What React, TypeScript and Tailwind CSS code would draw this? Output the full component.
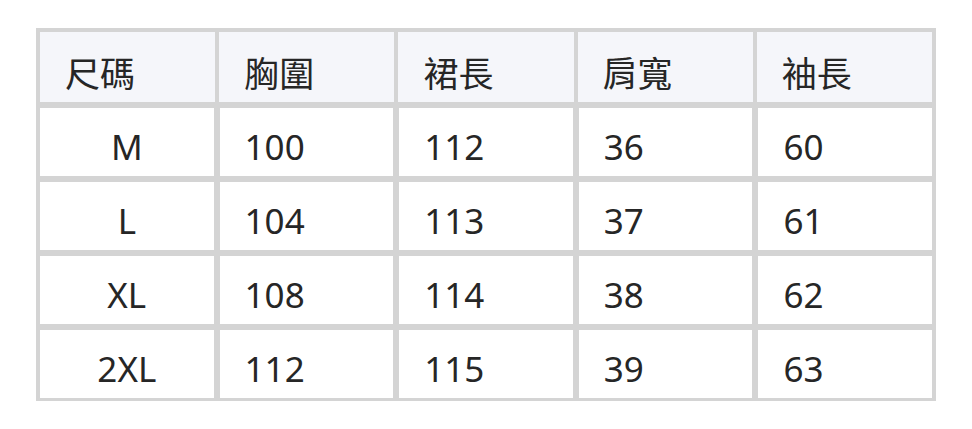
import React from "react";

const HEADERS = ["尺碼", "胸圍", "裙長", "肩寬", "袖長"];

const ROWS = [
  ["M", "100", "112", "36", "60"],
  ["L", "104", "113", "37", "61"],
  ["XL", "108", "114", "38", "62"],
  ["2XL", "112", "115", "39", "63"],
];

export default function App() {
  return (
    <div className="w-[972px] h-[429px] bg-white pt-[28px] pl-[36px] font-['Noto_Sans','Noto_Sans_CJK_TC',sans-serif] text-[#262626]">
      <div className="w-[900px] bg-[#d4d4d4] p-[4px] pb-[3px] flex flex-col gap-y-[6px]">
        {/* header */}
        <div className="grid grid-cols-5 gap-x-[4px] h-[70px]">
          {HEADERS.map((h) => (
            <div
              key={h}
              className="bg-[#f5f6fa] flex items-center pl-[25px] pt-[13px] text-[35px] leading-none"
            >
              {h}
            </div>
          ))}
        </div>

        {ROWS.map((row) => (
          <div key={row[0]} className="grid grid-cols-5 gap-x-[6px] h-[68px]">
            {row.map((cell, i) => (
              <div
                key={i}
                className={
                  i === 0
                    ? "bg-white flex items-center justify-center pt-[9px] text-[35px] leading-none"
                    : "bg-white flex items-center pl-[25px] pt-[9px] text-[35px] leading-none"
                }
              >
                {cell}
              </div>
            ))}
          </div>
        ))}
      </div>
    </div>
  );
}
